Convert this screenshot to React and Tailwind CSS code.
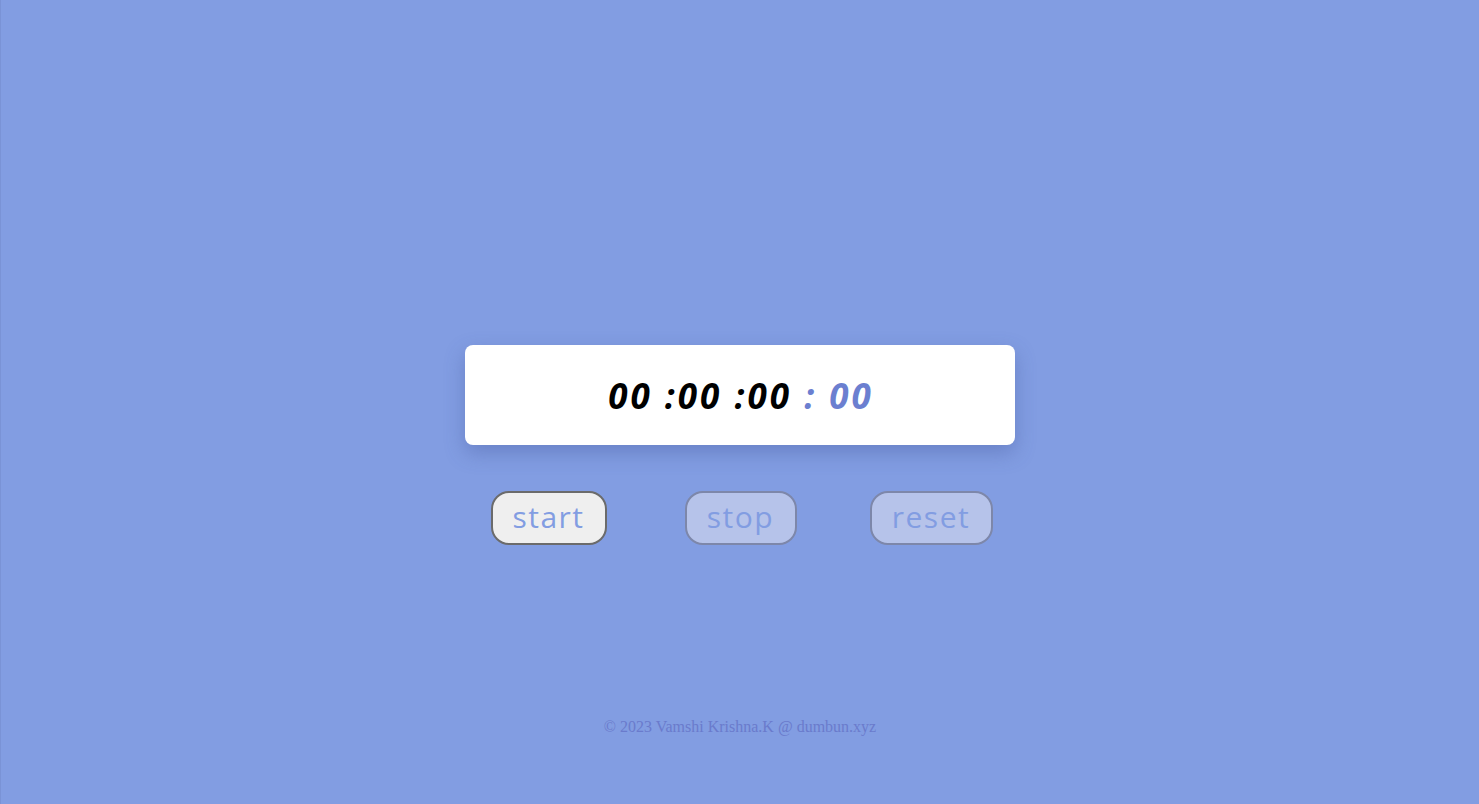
export default function App() {
  const buttons = [
    { label: 'start', cls: 'w-[116px] bg-[#efefef] border-[#6b6b6b]' },
    { label: 'stop', cls: 'ml-[78px] w-[112px] bg-[#b6c3ea] border-[#7d87aa]' },
    { label: 'reset', cls: 'ml-[73px] w-[123px] bg-[#b6c3ea] border-[#7d87aa]' },
  ];

  return (
    <div className="min-h-[804px] w-full bg-[#829de2] flex flex-col items-center border-l border-[#7a93d6]">
      {/* Timer card */}
      <div className="mt-[345px] w-[550px] h-[100px] bg-white rounded-lg shadow-[0_8px_20px_rgba(60,80,150,0.35)] flex items-center justify-center">
        <p className="font-['Open_Sans',sans-serif] italic font-bold text-[35px] tracking-[3px] leading-none text-black pl-[2px]">
          00 :00 :00 <span className="text-[#6b7fd0]">: 00</span>
        </p>
      </div>

      {/* Controls */}
      <div className="mt-[46px] flex items-center ml-[3px]">
        {buttons.map((b) => (
          <button
            key={b.label}
            className={`h-[54px] rounded-[18px] border-2 ${b.cls} font-['Open_Sans',sans-serif] text-[30px] tracking-[1.5px] leading-none text-[#829de2] pb-[2px]`}
          >
            {b.label}
          </button>
        ))}
      </div>

      {/* Footer */}
      <footer className="mt-[170px] font-['Liberation_Serif',serif] text-[16px] text-[#6a7bcc]">
        © 2023 Vamshi Krishna.K @ dumbun.xyz
      </footer>
    </div>
  );
}
